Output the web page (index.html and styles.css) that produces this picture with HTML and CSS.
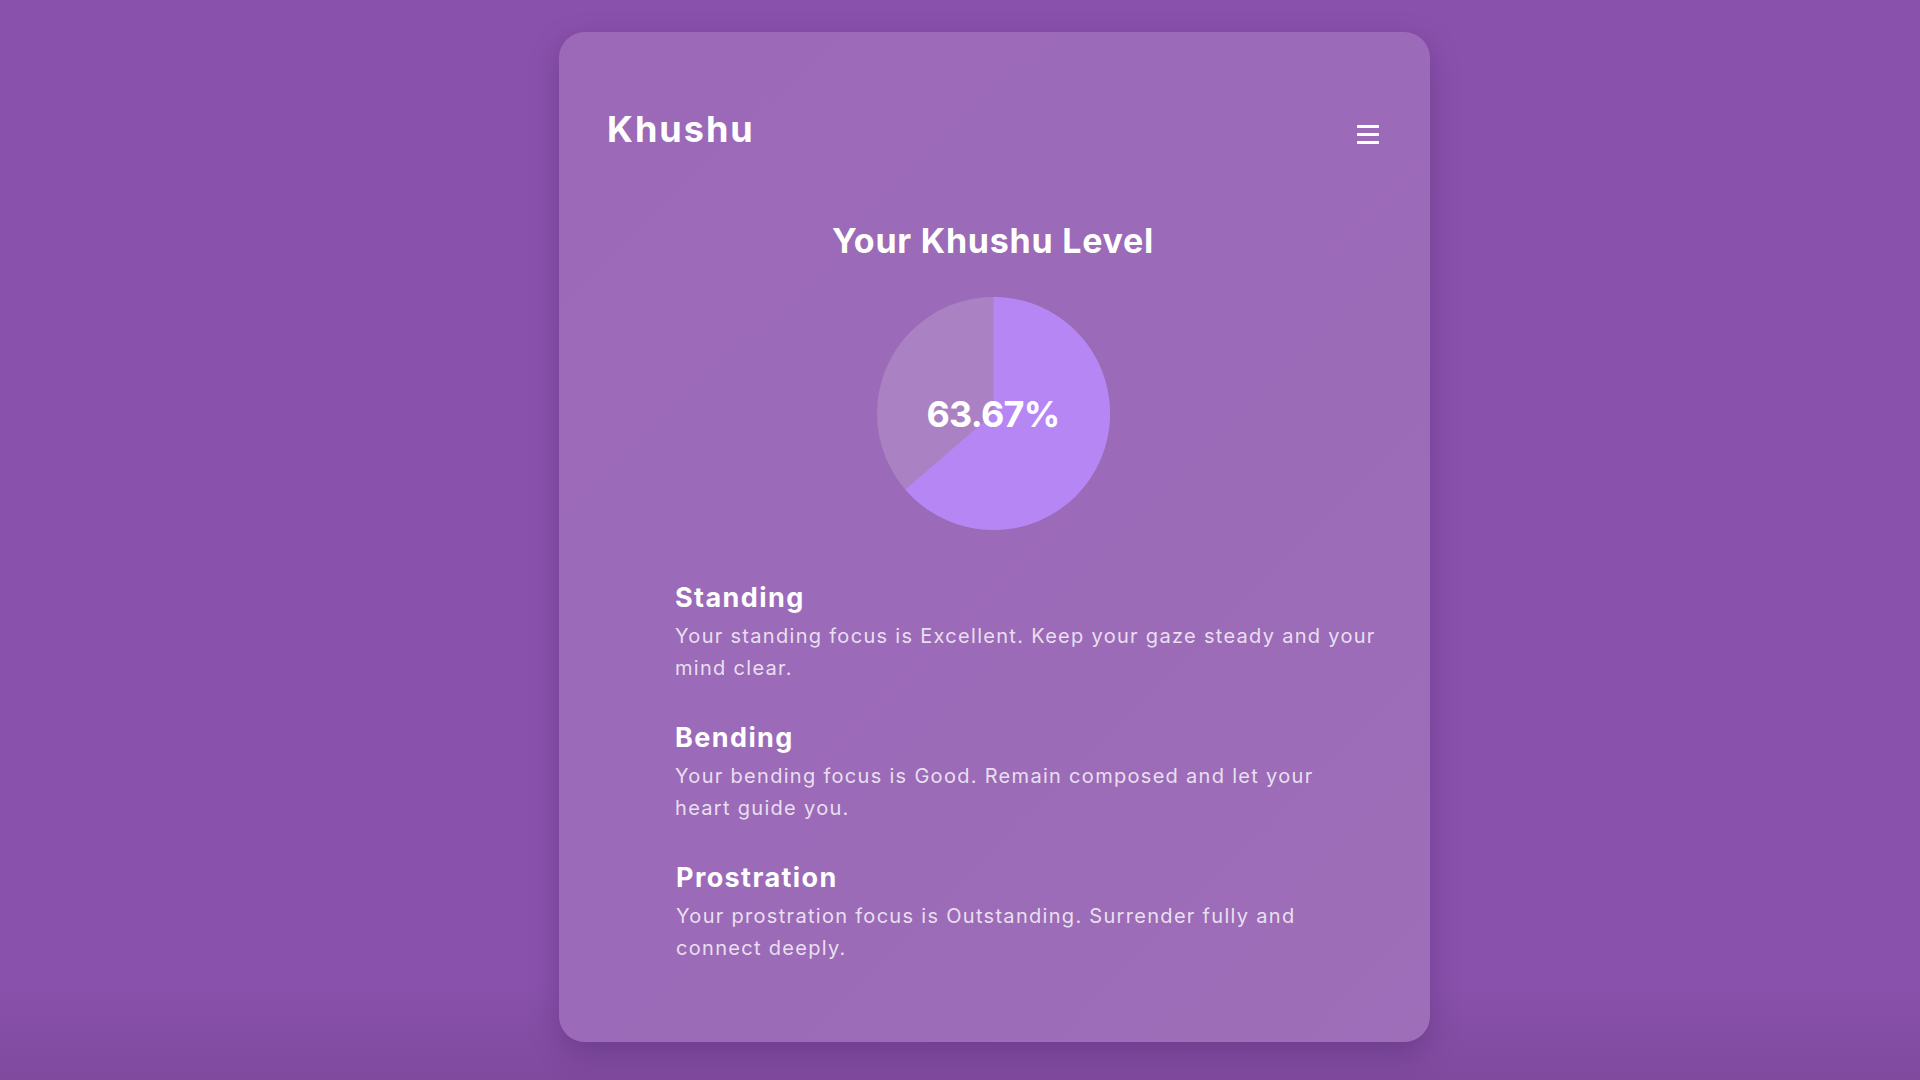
FILE: index.html
```html
<!DOCTYPE html>
<html lang="en">
<head>
<meta charset="utf-8">
<title>Khushu</title>
<link rel="stylesheet" href="styles.css">
</head>
<body>
<div class="page">
  <main class="card">
    <header class="header">
      <h1 class="logo">Khushu</h1>
      <button class="menu" aria-label="Menu">
        <svg width="22" height="19" viewBox="0 0 22 19"><rect x="0" y="0" width="22" height="3" rx="0.5" fill="#fff"/><rect x="0" y="8" width="22" height="3" rx="0.5" fill="#fff"/><rect x="0" y="16" width="22" height="3" rx="0.5" fill="#fff"/></svg>
      </button>
    </header>
    <section class="level">
      <h2 class="level-title">Your Khushu Level</h2>
      <div class="pie">
        <svg width="233" height="233" viewBox="0 0 233 233">
          <circle cx="116.5" cy="116.5" r="116.5" class="pie-rest"/>
          <path d="M116.5,116.5 L116.5,0 A116.5,116.5 0 1,1 28.3,192.6 Z" class="pie-value"/>
        </svg>
        <span class="pie-label">63.67%</span>
      </div>
    </section>
    <section class="details">
      <div class="item">
        <h3 class="item-title">Standing</h3>
        <p class="item-text">Your standing focus is Excellent. Keep your gaze steady and your mind clear.</p>
      </div>
      <div class="item">
        <h3 class="item-title">Bending</h3>
        <p class="item-text">Your bending focus is Good. Remain composed and let your<br>heart guide you.</p>
      </div>
      <div class="item item-last">
        <h3 class="item-title">Prostration</h3>
        <p class="item-text">Your prostration focus is Outstanding. Surrender fully and connect deeply.</p>
      </div>
    </section>
  </main>
</div>
</body>
</html>
```
FILE: styles.css
```css
* { box-sizing: border-box; }
html, body { margin: 0; padding: 0; }
body {
  min-height: 1080px;
  background: linear-gradient(to bottom, #8a51ac 0%, #8a51ac 91%, #7f4a9e 100%);
  font-family: "Inter", "Open Sans", sans-serif;
  color: #fff;
}
.page {
  padding: 32px 0 0 559px;
}
.card {
  width: 871px;
  padding: 76px 51px 78px 48px;
  border-radius: 26px;
  background: linear-gradient(135deg, #9b69b8 0%, #9c6bb8 60%, #9e6eb9 100%);
  box-shadow: 0 10px 30px rgba(40,10,70,0.25);
}
.header {
  display: flex;
  justify-content: space-between;
  align-items: flex-start;
}
.logo {
  margin: 0;
  font-size: 36px;
  line-height: 43px;
  font-weight: 700;
  letter-spacing: 2px;
}
.menu {
  margin-top: 17px;
  padding: 0;
  border: 0;
  background: none;
  display: block;
  line-height: 0;
}
.level {
  display: flex;
  flex-direction: column;
  align-items: center;
  margin-top: 69px;
}
.level-title {
  margin: 0;
  font-size: 34px;
  line-height: 41px;
  font-weight: 700;
  letter-spacing: 0.75px;
}
.pie {
  position: relative;
  width: 233px;
  height: 233px;
  margin-top: 36px;
}
.pie svg { display: block; }
.pie-rest { fill: #aa81c2; }
.pie-value { fill: #b686f4; }
.pie-label {
  position: absolute;
  inset: 0;
  display: flex;
  align-items: center;
  justify-content: center;
  font-size: 36px;
  font-weight: 700;
  letter-spacing: -0.8px;
}
.details {
  margin: 51px 0 0 68px;
  display: flex;
  flex-direction: column;
  gap: 37px;
}
.item-last { padding-left: 1px; }
.item-title {
  margin: 0;
  font-size: 27px;
  line-height: 34px;
  font-weight: 700;
  letter-spacing: 1.4px;
}
.item-text {
  margin: 5px 0 0;
  font-size: 20px;
  line-height: 32px;
  letter-spacing: 1.3px;
  color: rgba(255,255,255,0.8);
}
```
